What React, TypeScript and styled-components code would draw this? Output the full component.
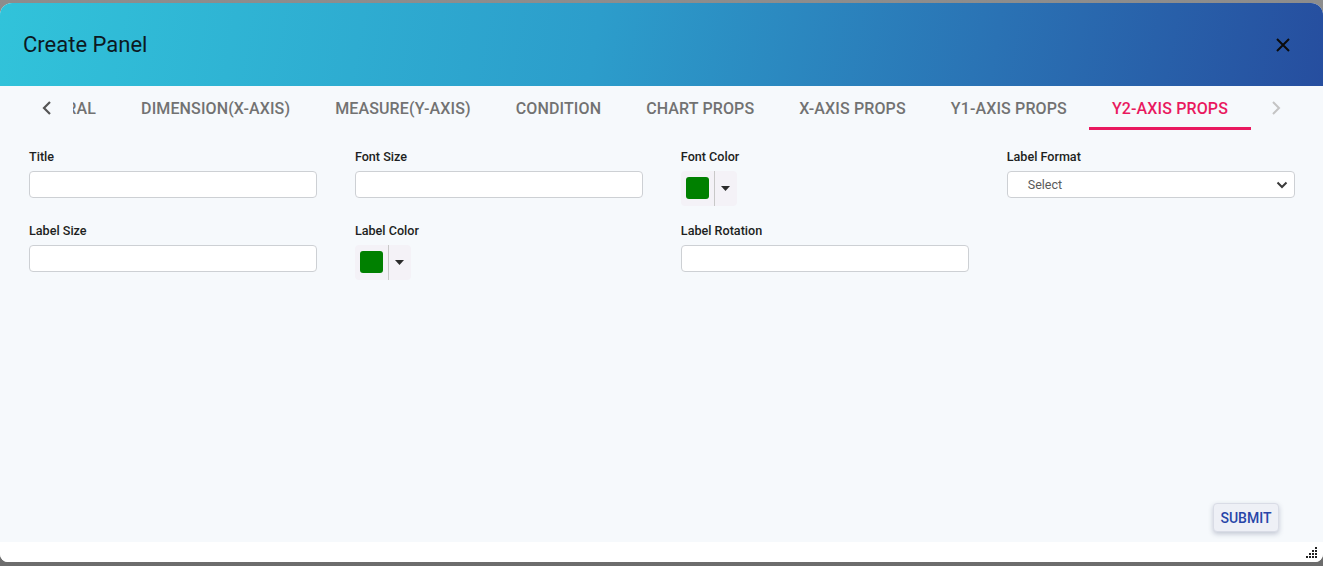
import styled, { createGlobalStyle } from "styled-components";

const GlobalStyle = createGlobalStyle`
  html, body {
    margin: 0;
    padding: 0;
  }
  body {
    background: #8c8c8c;
    font-family: Roboto, "Liberation Sans", sans-serif;
  }
  * {
    box-sizing: border-box;
  }
`;

const tabs = [
  "General",
  "Dimension(X-Axis)",
  "Measure(Y-Axis)",
  "Condition",
  "Chart Props",
  "X-Axis Props",
  "Y1-Axis Props",
  "Y2-Axis Props",
];

function ColorPicker({ color }: { color: string }) {
  return (
    <PickerBox>
      <Swatch $color={color} />
      <PickerDivider />
      <PickerCaret>
        <svg width="9" height="5" viewBox="0 0 9 5">
          <path d="M0 0h9L4.5 5z" fill="#2b2b2b" />
        </svg>
      </PickerCaret>
    </PickerBox>
  );
}

export default function App() {
  return (
    <>
      <GlobalStyle />
      <Page>
        <Dialog>
          <Header>
            <Title>Create Panel</Title>
            <CloseButton aria-label="close">
              <svg width="16" height="16" viewBox="0 0 16 16">
                <path d="M2 2l12 12M14 2L2 14" stroke="#0b0b0b" strokeWidth="2" />
              </svg>
            </CloseButton>
          </Header>
          <Body>
            <TabBar>
              <ScrollButton>
                <svg width="10" height="14" viewBox="0 0 10 14">
                  <path d="M8 1L2 7l6 6" stroke="#555" strokeWidth="2.2" fill="none" />
                </svg>
              </ScrollButton>
              <TabScroller>
                <TabList>
                  {tabs.map((t) => (
                    <Tab key={t} $active={t === "Y2-Axis Props"}>
                      {t}
                    </Tab>
                  ))}
                </TabList>
              </TabScroller>
              <ScrollButton>
                <svg width="10" height="14" viewBox="0 0 10 14">
                  <path d="M2 1l6 6-6 6" stroke="#c4c4c4" strokeWidth="2" fill="none" />
                </svg>
              </ScrollButton>
            </TabBar>

            <Form>
              <Field>
                <Label>Title</Label>
                <TextInput />
              </Field>
              <Field>
                <Label>Font Size</Label>
                <TextInput />
              </Field>
              <Field>
                <Label>Font Color</Label>
                <ColorPicker color="#008000" />
              </Field>
              <Field>
                <Label>Label Format</Label>
                <SelectBox>
                  <SelectText>Select</SelectText>
                  <svg width="12" height="8" viewBox="0 0 12 8">
                    <path d="M1.5 1.5L6 6l4.5-4.5" stroke="#3a3a3a" strokeWidth="2" fill="none" />
                  </svg>
                </SelectBox>
              </Field>
              <Field>
                <Label>Label Size</Label>
                <TextInput />
              </Field>
              <Field>
                <Label>Label Color</Label>
                <ColorPicker color="#008000" />
              </Field>
              <Field>
                <Label>Label Rotation</Label>
                <TextInput />
              </Field>
            </Form>

            <Footer>
              <SubmitButton>SUBMIT</SubmitButton>
            </Footer>
          </Body>
          <BottomStrip>
            <svg width="12" height="12" viewBox="0 0 12 12">
              <g fill="#222">
                <rect x="9" y="0" width="2" height="2" />
                <rect x="6" y="3" width="2" height="2" />
                <rect x="9" y="3" width="2" height="2" />
                <rect x="3" y="6" width="2" height="2" />
                <rect x="6" y="6" width="2" height="2" />
                <rect x="9" y="6" width="2" height="2" />
                <rect x="0" y="9" width="2" height="2" />
                <rect x="3" y="9" width="2" height="2" />
                <rect x="6" y="9" width="2" height="2" />
                <rect x="9" y="9" width="2" height="2" />
              </g>
            </svg>
          </BottomStrip>
        </Dialog>
      </Page>
    </>
  );
}

const Page = styled.div`
  height: 566px;
  padding-top: 3px;
  background: linear-gradient(#8d8d8d, #6c6c6c);
  overflow: hidden;
`;

const Dialog = styled.div`
  height: 559px;
  background: #ffffff;
  border-radius: 12px 12px 8px 8px;
  overflow: hidden;
  display: flex;
  flex-direction: column;
`;

const Header = styled.div`
  height: 83px;
  flex-shrink: 0;
  display: flex;
  align-items: center;
  justify-content: space-between;
  padding: 0 32px 0 23px;
  background: linear-gradient(100deg, #31c3da 0%, #2c9dcb 45%, #2a72b4 75%, #264e9f 100%);
`;

const Title = styled.h2`
  margin: 0;
  font-size: 22px;
  font-weight: 400;
  color: #0c1822;
`;

const CloseButton = styled.button`
  border: none;
  background: none;
  padding: 0;
  display: flex;
  cursor: pointer;
`;

const Body = styled.div`
  flex: 1;
  background: #f6f9fc;
  display: flex;
  flex-direction: column;
`;

const TabBar = styled.div`
  height: 44px;
  flex-shrink: 0;
  display: flex;
  padding: 0 27px;
`;

const ScrollButton = styled.div`
  width: 40px;
  flex-shrink: 0;
  display: flex;
  align-items: center;
  justify-content: center;
`;

const TabScroller = styled.div`
  flex: 1;
  overflow: hidden;
  margin-left: 6px;
`;

const TabList = styled.div`
  display: flex;
  height: 100%;
  margin-left: -70px;
`;

const Tab = styled.div<{ $active?: boolean }>`
  position: relative;
  flex-shrink: 0;
  display: flex;
  align-items: center;
  padding: 1px 22.5px 0;
  font-size: 16px;
  letter-spacing: 0.13px;
  font-weight: 500;
  text-transform: uppercase;
  color: ${({ $active }) => ($active ? "#e9195f" : "#727272")};
  white-space: nowrap;

  &::after {
    content: "";
    display: ${({ $active }) => ($active ? "block" : "none")};
    position: absolute;
    left: 0;
    right: 0;
    bottom: 0;
    height: 3px;
    background: #e9195f;
  }
`;

const Form = styled.div`
  display: grid;
  grid-template-columns: repeat(4, 1fr);
  column-gap: 37.67px;
  row-gap: 18px;
  padding: 20px 28px 0 29px;
  align-items: start;
`;

const Field = styled.div`
  display: flex;
  flex-direction: column;
  align-items: flex-start;
`;

const Label = styled.label`
  font-size: 12.6px;
  font-weight: 500;
  line-height: 14px;
  color: #1d1f22;
  margin-bottom: 7px;
`;

const TextInput = styled.input`
  width: 100%;
  height: 27px;
  border: 1px solid #cdd0d4;
  border-radius: 4px;
  background: #ffffff;
  outline: none;
`;

const PickerBox = styled.div`
  width: 56px;
  height: 35px;
  display: flex;
  align-items: stretch;
  background: #f4f2f7;
  border-radius: 4px;
`;

const Swatch = styled.div<{ $color: string }>`
  width: 23px;
  height: 22px;
  margin: 6px 5px 0 5px;
  border-radius: 3px;
  background: ${({ $color }) => $color};
`;

const PickerDivider = styled.div`
  width: 1px;
  background: #c8c8c8;
`;

const PickerCaret = styled.div`
  flex: 1;
  display: flex;
  align-items: center;
  justify-content: center;
  padding-bottom: 1px;
`;

const SelectBox = styled.div`
  width: 100%;
  height: 27px;
  display: flex;
  align-items: center;
  justify-content: space-between;
  padding: 0 6px 0 20px;
  border: 1px solid #cdd0d4;
  border-radius: 4px;
  background: #ffffff;
`;

const SelectText = styled.span`
  font-size: 12.5px;
  color: #5a5a5a;
`;

const Footer = styled.div`
  margin-top: auto;
  display: flex;
  justify-content: flex-end;
  padding: 0 44px 10px 0;
`;

const SubmitButton = styled.button`
  width: 66px;
  height: 29px;
  padding: 0;
  border: 1px solid #d9dce6;
  border-radius: 4px;
  background: #eef0f6;
  color: #2845a8;
  font-family: Roboto, "Liberation Sans", sans-serif;
  font-size: 14px;
  font-weight: 500;
  box-shadow: 0 2px 5px rgba(40, 50, 90, 0.25);
  cursor: pointer;
`;

const BottomStrip = styled.div`
  height: 20px;
  flex-shrink: 0;
  display: flex;
  align-items: flex-end;
  justify-content: flex-end;
  padding: 0 5px 3px 0;
  background: #ffffff;
`;
